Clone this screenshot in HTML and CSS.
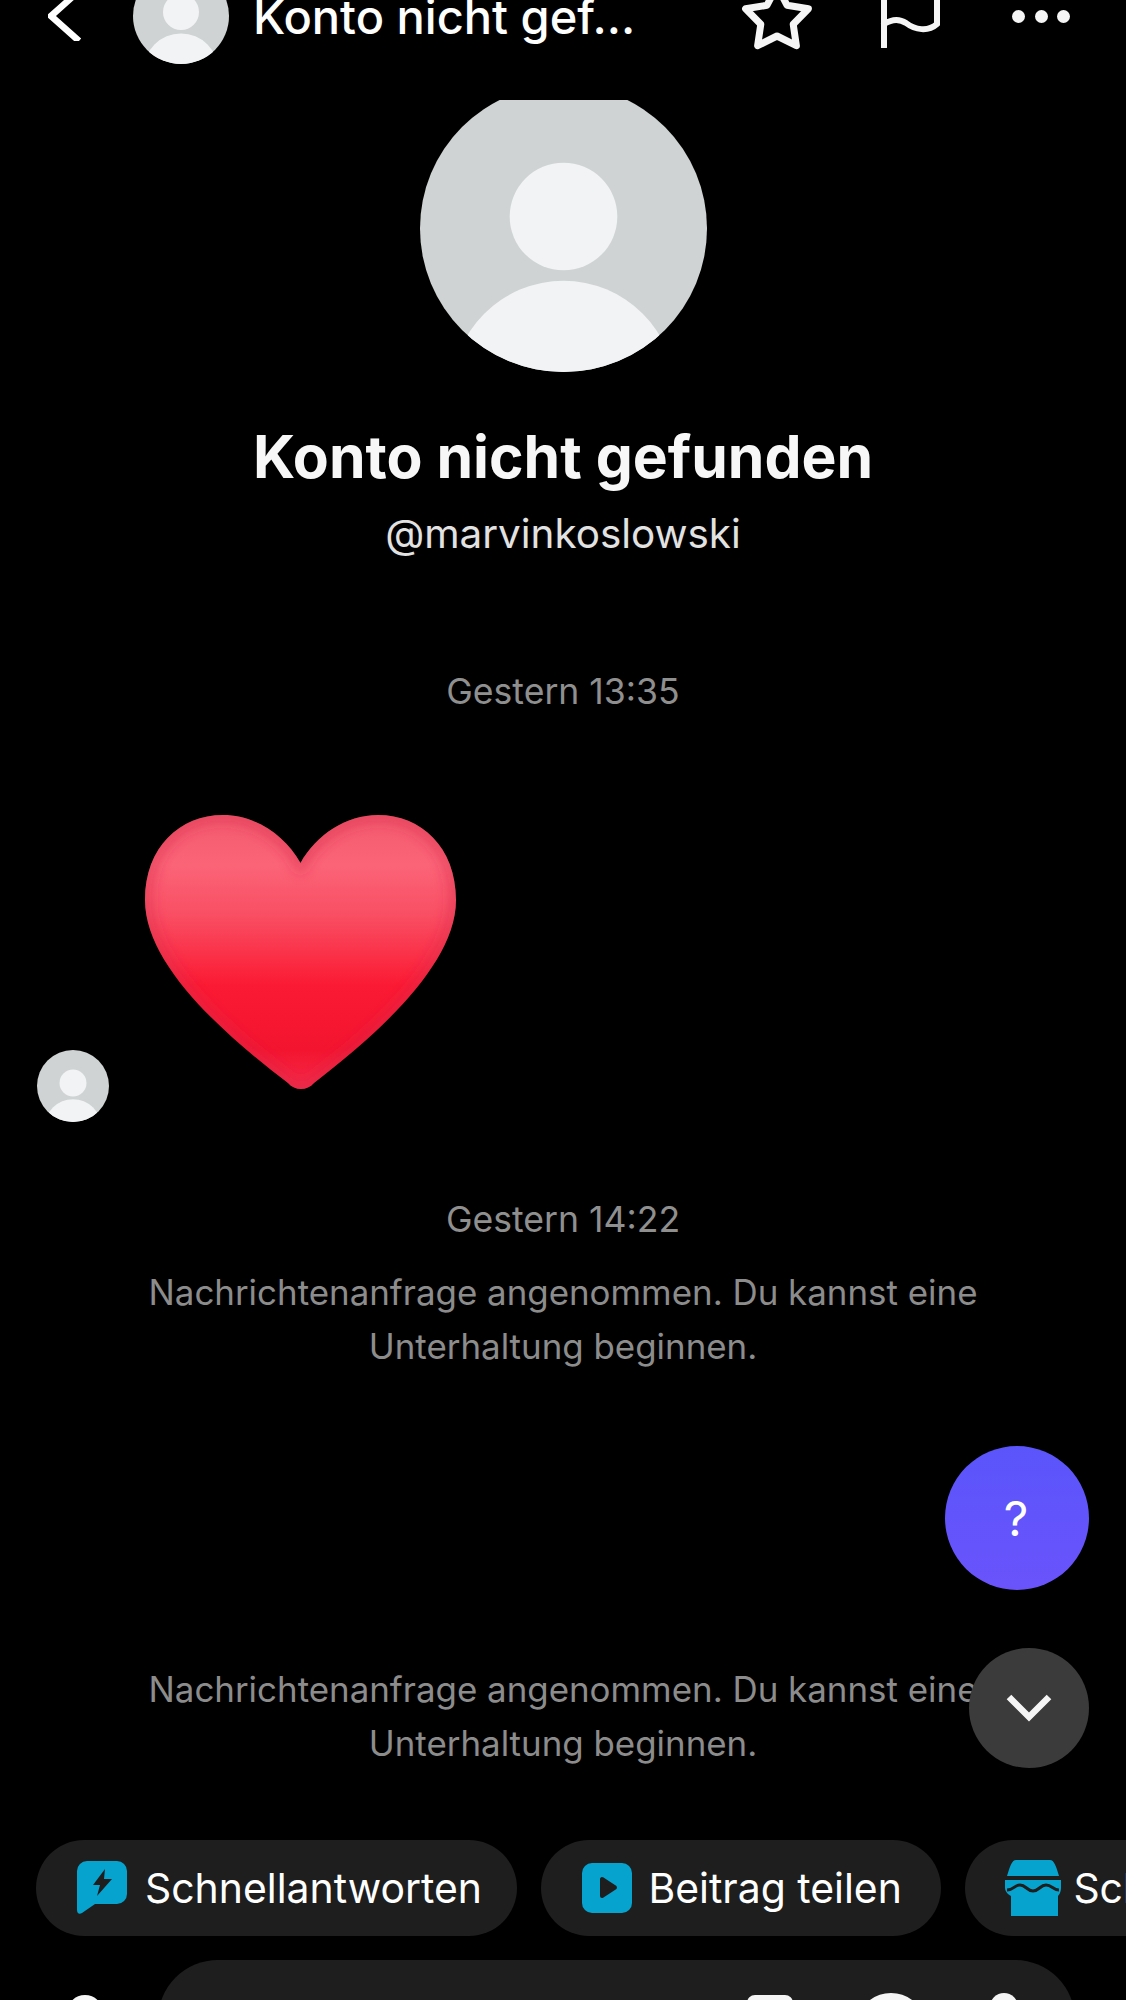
FILE: index.html
```html
<!DOCTYPE html>
<html lang="de">
<head>
<meta charset="utf-8">
<title>Konto nicht gefunden</title>
<link rel="stylesheet" href="styles.css">
</head>
<body>
<div class="screen">
  <header class="topbar">
    <svg class="back" viewBox="0 0 34 50"><path d="M31 0 3 25l28 25" /></svg>
    <svg class="tiny-avatar" viewBox="0 0 96 96"><use href="#person"/></svg>
    <span class="top-name">Konto nicht gef...</span>
    <svg class="star" viewBox="0 0 72 72"><path d="M36 6 46 25.250 67.400 28.800 52.200 44.250 55.400 65.700 36 56 16.600 65.700 19.800 44.250 4.600 28.800 26 25.250Z"/></svg>
    <svg class="flag" viewBox="0 0 60 64"><path d="M4 63V0M4 40C12 35 20 35 26 39C35 46 48 48 57 40V0"/></svg>
    <div class="dots"><i></i><i></i><i></i></div>
  </header>

  <section class="profile">
    <div class="avatar-clip">
      <svg class="big-avatar" viewBox="0 0 96 96">
        <defs>
          <clipPath id="round"><circle cx="48" cy="48" r="48"/></clipPath>
          <g id="person" clip-path="url(#round)">
            <rect width="96" height="96" fill="#cfd3d3"/>
            <circle cx="48" cy="44" r="18" fill="#f2f3f5"/>
            <circle cx="48" cy="103" r="37.500" fill="#f2f3f5"/>
          </g>
        </defs>
        <use href="#person"/>
      </svg>
    </div>
    <h1 class="name">Konto nicht gefunden</h1>
    <p class="handle">@marvinkoslowski</p>
  </section>

  <p class="time time-first">Gestern 13:35</p>

  <div class="message">
    <svg class="small-avatar" viewBox="0 0 96 96"><use href="#person"/></svg>
    <svg class="heart" viewBox="0 0 311 275">
      <defs>
        <linearGradient id="heartFill" x1="0" y1="0" x2="0" y2="1">
          <stop offset="0" stop-color="#f25a6e"/>
          <stop offset=".18" stop-color="#fb6477"/>
          <stop offset=".36" stop-color="#f94f64"/>
          <stop offset=".62" stop-color="#fb1a33"/>
          <stop offset=".85" stop-color="#f3142f"/>
          <stop offset="1" stop-color="#f62a48"/>
        </linearGradient>
        <filter id="soft" x="-10%" y="-10%" width="120%" height="120%"><feGaussianBlur stdDeviation="7"/></filter>
        <clipPath id="heartClip"><path d="M155.500 48C140 20 110 0 78 0C35 0 0 32 0 85C0 150 80 220 143 268C150 276 162 276 169 268C231 220 311 150 311 85C311 32 276 0 233 0C201 0 171 20 155.500 48Z"/></clipPath>
      </defs>
      <g clip-path="url(#heartClip)">
        <rect width="311" height="275" fill="url(#heartFill)"/>
        <path fill="none" stroke="#d92a4a" stroke-opacity=".55" stroke-width="12" filter="url(#soft)" d="M155.500 48C140 20 110 0 78 0C35 0 0 32 0 85C0 150 80 220 143 268C150 276 162 276 169 268C231 220 311 150 311 85C311 32 276 0 233 0C201 0 171 20 155.500 48Z"/>
      </g>
    </svg>
  </div>

  <p class="time time-second">Gestern 14:22</p>
  <p class="notice notice-first">Nachrichtenanfrage angenommen. Du kannst eine<br>Unterhaltung beginnen.</p>
  <div class="fab-purple">?</div>
  <p class="notice notice-second">Nachrichtenanfrage angenommen. Du kannst eine<br>Unterhaltung beginnen.</p>
  <div class="fab-down"><svg viewBox="0 0 46 28"><path d="M3 3l20 20L43 3"/></svg></div>

  <nav class="chips">
    <div class="chip chip-one">
      <svg class="chip-icon" viewBox="0 0 50 54"><path fill="#06a3cf" d="M10 0h30a10 10 0 0 1 10 10v23a10 10 0 0 1-10 10H18L5 52c-3 2-5 0-5-3V10A10 10 0 0 1 10 0Z"/><path fill="#1e1e1e" d="M28 8 16 24h7l-3 11 15-17h-8Z"/></svg>
      <span>Schnellantworten</span>
    </div>
    <div class="chip chip-two">
      <svg class="chip-icon play" viewBox="0 0 50 50"><rect width="50" height="50" rx="10" fill="#06a3cf"/><path fill="#1e1e1e" stroke="#1e1e1e" stroke-width="4" stroke-linejoin="round" d="M20 16v17l13-8.500Z"/></svg>
      <span>Beitrag teilen</span>
    </div>
    <div class="chip chip-three">
      <svg class="chip-icon shop" viewBox="0 0 58 56"><path fill="#06a3cf" d="M12 0h34c4 0 6 6 9 16H3C6 6 8 0 12 0Z"/><path fill="#06a3cf" d="M1 20h56v8c0 5-3 8-3 8v20H7V36s-6-3-6-8Z"/><path fill="none" stroke="#1e1e1e" stroke-width="3" d="M0 17.500h58M3 30c7 0 7-5 13-5s7 6 13 6 7-6 13-6 7 5 13 5"/></svg>
      <span>Schnellkauf</span>
    </div>
  </nav>

  <footer class="composer">
    <span class="person-dome"></span>
    <div class="input">
      <span class="in-square"></span>
      <span class="in-circle"></span>
      <span class="in-dot"></span>
    </div>
  </footer>
</div>
</body>
</html>
```

FILE: styles.css
```css
* { box-sizing: border-box; }
html, body { margin: 0; background: #000; }
.screen { position: relative; width: 1126px; height: 2000px; overflow: hidden; background: #000; color: #fff; font-family: Inter, "Liberation Sans", sans-serif; }
.topbar { display: flex; align-items: center; height: 64px; margin-top: -16px; padding-left: 48px; position: relative; }
.back { width: 34px; height: 50px; fill: none; stroke: #fff; stroke-width: 6.500; flex: none; }
.tiny-avatar { width: 96px; height: 96px; margin-left: 51px; flex: none; }
.top-name { margin-left: 24px; font-size: 47px; font-weight: 500; width: 488px; flex: none; white-space: nowrap; }
.star { width: 72px; height: 72px; fill: none; stroke: #f5f5f5; stroke-width: 7; stroke-linejoin: round; flex: none; }
.flag { width: 60px; height: 64px; margin-left: 67px; fill: none; stroke: #f5f5f5; stroke-width: 6; stroke-linecap: round; flex: none; }
.dots { display: flex; gap: 9.500px; margin-left: 72px; }
.dots i { width: 13px; height: 13px; border-radius: 50%; background: #f5f5f5; }
.profile { display: flex; flex-direction: column; align-items: center; margin-top: 52px; }
.avatar-clip { width: 287px; height: 272px; overflow: hidden; position: relative; }
.big-avatar { position: absolute; left: 0; bottom: 0; width: 287px; height: 287px; }
.name { margin: 50px 0 0; font-size: 58.800px; line-height: 70px; font-weight: 700; color: #f7f7f7; }
.handle { margin: 17px 0 0; font-size: 40.400px; line-height: 50px; color: #e2e2e2; }
.time { margin: 0; text-align: center; font-size: 35.600px; line-height: 44px; color: #8f8f8f; }
.time-first { margin-top: 111px; }
.message { display: flex; align-items: flex-end; margin-top: 101px; padding-left: 37px; }
.small-avatar { width: 72px; height: 72px; flex: none; }
.heart { width: 311px; height: 275px; margin-left: 36px; margin-bottom: 32px; flex: none; }
.time-second { margin-top: 76px; }
.notice { margin: 0; text-align: center; font-size: 34.900px; line-height: 54px; color: #8c8c8c; }
.notice-first { margin-top: 23px; }
.notice-second { margin-top: 289px; }
.fab-purple, .fab-down { position: absolute; right: 37px; display: flex; align-items: center; justify-content: center; border-radius: 50%; }
.fab-purple { top: 1446px; width: 144px; height: 144px; padding-right: 2px; background: linear-gradient(180deg, #5a55fb, #6a53fb); font-size: 48px; }
.fab-down { top: 1648px; width: 120px; height: 120px; background: #3b3b3b; }
.fab-down svg { width: 46px; height: 28px; fill: none; stroke: #f5f5f5; stroke-width: 6.500; }
.chips { position: absolute; top: 1840px; left: 36px; display: flex; gap: 24px; white-space: nowrap; }
.chip { display: flex; align-items: center; height: 96px; padding-left: 41px; padding-right: 38px; border-radius: 48px; background: #1e1e1e; font-size: 40.900px; }
.chip-one { padding-right: 35.500px; }
.chip-icon { width: 50px; height: 54px; flex: none; margin-right: 18px; }
.chip-icon.play { height: 50px; margin-right: 16px; }
.chip-two { padding-right: 39.500px; }
.chip-three { padding-left: 39px; }
.chip-icon.shop { width: 58px; height: 56px; margin-right: 11px; }
.composer { position: absolute; top: 1960px; left: 0; width: 100%; }
.person-dome { position: absolute; left: 67px; top: 35px; width: 36px; height: 36px; border-radius: 50%; background: #f5f5f5; }
.input { position: absolute; left: 158px; width: 917px; height: 120px; border-radius: 60px; background: #1e1e1e; }
.in-square { position: absolute; left: 589px; top: 35px; width: 46px; height: 46px; border-radius: 8px; border: 6px solid #f5f5f5; }
.in-circle { position: absolute; left: 698px; top: 33px; width: 70px; height: 70px; border-radius: 50%; border: 8px solid #f5f5f5; }
.in-dot { position: absolute; left: 832px; top: 33px; width: 28px; height: 28px; border-radius: 50%; background: #f5f5f5; }
```
